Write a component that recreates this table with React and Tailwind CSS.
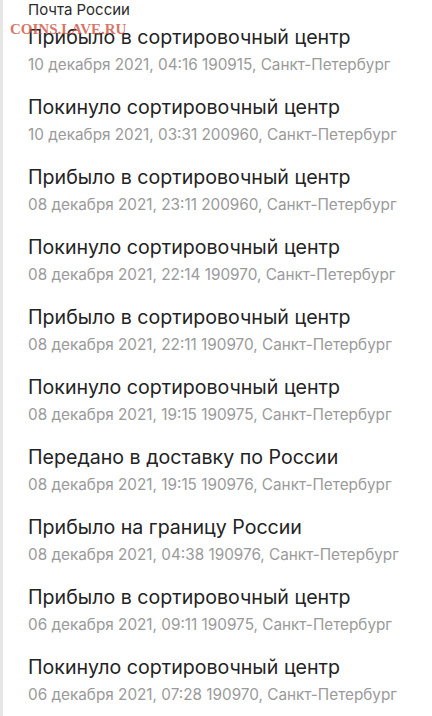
import React from "react";

const items = [
  ["Прибыло в сортировочный центр", "10 декабря 2021, 04:16 190915, Санкт-Петербург"],
  ["Покинуло сортировочный центр", "10 декабря 2021, 03:31 200960, Санкт-Петербург"],
  ["Прибыло в сортировочный центр", "08 декабря 2021, 23:11 200960, Санкт-Петербург"],
  ["Покинуло сортировочный центр", "08 декабря 2021, 22:14 190970, Санкт-Петербург"],
  ["Прибыло в сортировочный центр", "08 декабря 2021, 22:11 190970, Санкт-Петербург"],
  ["Покинуло сортировочный центр", "08 декабря 2021, 19:15 190975, Санкт-Петербург"],
  ["Передано в доставку по России", "08 декабря 2021, 19:15 190976, Санкт-Петербург"],
  ["Прибыло на границу России", "08 декабря 2021, 04:38 190976, Санкт-Петербург"],
  ["Прибыло в сортировочный центр", "06 декабря 2021, 09:11 190975, Санкт-Петербург"],
  ["Покинуло сортировочный центр", "06 декабря 2021, 07:28 190970, Санкт-Петербург"],
];

export default function App() {
  return (
    <div className="relative w-[432px] h-[716px] overflow-hidden bg-white border-l-[3px] border-[#e6e6e6] font-['Inter',sans-serif]">
      <div className="pl-[25px]">
        <div className="text-[15px] leading-[20px] text-[#2b2b2b]">Почта России</div>
        <div className="mt-[5px] flex flex-col">
          {items.map(([t, s], i) => (
            <div key={i} className="h-[70px]">
              <div className="text-[19.6px] leading-[24px] text-[#232323]">{t}</div>
              <div className="mt-[6px] text-[15.3px] leading-[20px] text-[#9a9a9a]">{s}</div>
            </div>
          ))}
        </div>
      </div>
      <div className="absolute left-[7px] top-[21px] font-['Liberation_Serif',serif] font-bold text-[15px] leading-[16px] text-[#d0503c]/80">
        COINS.LAVE.RU
      </div>
    </div>
  );
}
